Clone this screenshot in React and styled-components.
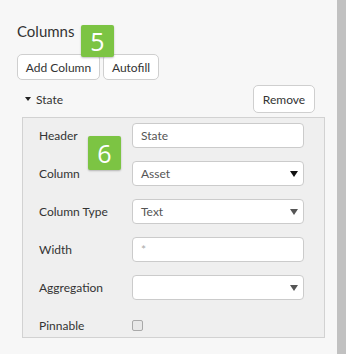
import React from "react";
import styled, { createGlobalStyle } from "styled-components";

const GlobalStyle = createGlobalStyle`
  html, body {
    margin: 0;
    padding: 0;
    background: #f7f7f7;
  }
  body {
    font-family: Lato, "Open Sans", sans-serif;
    color: #333;
  }
`;

const Page = styled.div`
  display: flex;
  width: 346px;
  height: 354px;
  overflow: hidden;
`;

const Content = styled.div`
  position: relative;
  flex: 1;
  padding: 21px 12px 0 17px;
`;

const Scrollbar = styled.div`
  width: 9px;
  background: #c1c1c1;
`;

const Title = styled.div`
  font-size: 15px;
  line-height: 20px;
  height: 20px;
  color: #333;
`;

const Badge = styled.div`
  position: absolute;
  left: ${(p) => p.left}px;
  top: ${(p) => p.top}px;
  width: 33px;
  height: ${(p) => p.h}px;
  background: #7cc443;
  border-radius: 2px;
  box-shadow: 0 1px 2px rgba(0, 0, 0, 0.25);
  color: #fff;
  font-family: "Open Sans", Lato, sans-serif;
  font-size: 25px;
  line-height: ${(p) => p.h}px;
  text-align: center;
  z-index: 2;
`;

const ButtonRow = styled.div`
  display: flex;
  gap: 3px;
  margin-top: 13px;
`;

const Button = styled.button`
  box-sizing: border-box;
  width: ${(p) => p.w}px;
  height: ${(p) => p.h || 26}px;
  padding: 0;
  border: 1px solid #cfcfcf;
  border-radius: 5px;
  background: #fff;
  font-family: Lato, "Open Sans", sans-serif;
  font-size: 12px;
  color: #333;
`;

const Section = styled.div`
  margin-top: 5px;
  margin-left: 5px;
`;

const SectionHead = styled.div`
  display: flex;
  align-items: center;
  justify-content: space-between;
  height: 28px;
  padding: 0 10px 0 3px;
  margin-bottom: 4px;
`;

const Toggle = styled.div`
  display: flex;
  align-items: center;
  gap: 5px;
  font-size: 12px;
  color: #333;
`;

const Caret = styled.span`
  width: 0;
  height: 0;
  border-left: 3px solid transparent;
  border-right: 3px solid transparent;
  border-top: 4px solid #222;
`;

const Panel = styled.div`
  box-sizing: border-box;
  display: grid;
  grid-template-columns: 93px 172px;
  grid-auto-rows: 25px;
  row-gap: 13px;
  align-content: start;
  align-items: center;
  height: 221px;
  padding: 5px 0 0 16px;
  background: #efefef;
  border: 1px solid #d2d2d2;
`;

const Label = styled.div`
  font-size: 12px;
  color: #333;
`;

const Field = styled.div`
  box-sizing: border-box;
  display: flex;
  align-items: center;
  justify-content: space-between;
  height: 25px;
  padding: 0 5px 0 8px;
  background: #fff;
  border: 1px solid #cbcbcb;
  border-radius: 4px;
  font-size: 12px;
  color: ${(p) => (p.placeholder ? "#aaa" : "#555")};
`;

const Check = styled.div`
  box-sizing: border-box;
  width: 11px;
  height: 11px;
  border: 1px solid #a9a9a9;
  border-radius: 2px;
  background: #e8e8e8;
`;

const Arrow = ({ color }) => (
  <svg width="8" height="6" viewBox="0 0 8 6">
    <polygon points="0,0 8,0 4,6" fill={color} />
  </svg>
);

const rows = [
  { label: "Header", value: "State" },
  { label: "Column", value: "Asset", arrow: "#111" },
  { label: "Column Type", value: "Text", arrow: "#555" },
  { label: "Width", value: "*", placeholder: true },
  { label: "Aggregation", value: "", arrow: "#555" },
];

export default function App() {
  return (
    <Page>
      <GlobalStyle />
      <Content>
        <Title>Columns</Title>
        <Badge left={81} top={25} h={32}>5</Badge>
        <ButtonRow>
          <Button w={83}>Add Column</Button>
          <Button w={56}>Autofill</Button>
        </ButtonRow>
        <Section>
          <SectionHead>
            <Toggle>
              <Caret />
              State
            </Toggle>
            <Button w={62} h={28}>Remove</Button>
          </SectionHead>
          <Panel>
            {rows.map((r) => (
              <React.Fragment key={r.label}>
                <Label>{r.label}</Label>
                <Field placeholder={r.placeholder ? 1 : 0}>
                  <span>{r.value}</span>
                  {r.arrow && <Arrow color={r.arrow} />}
                </Field>
              </React.Fragment>
            ))}
            <Label>Pinnable</Label>
            <Check />
          </Panel>
        </Section>
        <Badge left={88} top={136} h={34}>6</Badge>
      </Content>
      <Scrollbar />
    </Page>
  );
}
